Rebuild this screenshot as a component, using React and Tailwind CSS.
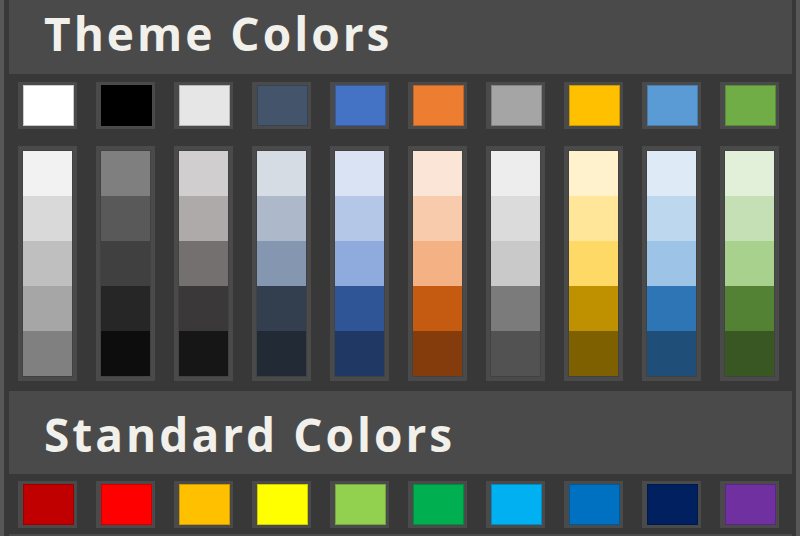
const theme = [
  { base: "#ffffff", shades: ["#f2f2f2", "#d9d9d9", "#bfbfbf", "#a6a6a6", "#808080"] },
  { base: "#000000", shades: ["#7f7f7f", "#595959", "#404040", "#262626", "#0d0d0d"] },
  { base: "#e7e6e6", shades: ["#d0cece", "#aeaaaa", "#757070", "#3a3838", "#171616"] },
  { base: "#44546a", shades: ["#d6dce4", "#adb9ca", "#8496b0", "#333f4f", "#222a35"] },
  { base: "#4472c4", shades: ["#dae3f3", "#b4c7e7", "#8faadc", "#2f5597", "#203864"] },
  { base: "#ed7d31", shades: ["#fbe5d6", "#f8cbad", "#f4b183", "#c55a11", "#843c0c"] },
  { base: "#a5a5a5", shades: ["#ededed", "#dbdbdb", "#c9c9c9", "#7b7b7b", "#525252"] },
  { base: "#ffc000", shades: ["#fff2cc", "#ffe699", "#ffd966", "#bf9000", "#7f6000"] },
  { base: "#5b9bd5", shades: ["#deebf7", "#bdd7ee", "#9dc3e6", "#2e75b6", "#1f4e79"] },
  { base: "#70ad47", shades: ["#e2f0d9", "#c5e0b4", "#a9d18e", "#548235", "#385723"] },
];

const standard = ["#c00000", "#ff0000", "#ffc000", "#ffff00", "#92d050", "#00b050", "#00b0f0", "#0070c0", "#002060", "#7030a0"];

const Swatch = ({ color }) => (
  <div className="w-[59px] h-[47px] shrink-0 bg-[#4a4a4a] pt-[3px] pl-[5px]">
    <div className="w-[51px] h-[41px] border border-black/20" style={{ background: color }} />
  </div>
);

const ShadeColumn = ({ shades }) => (
  <div className="w-[59px] shrink-0 bg-[#4a4a4a] py-[4px] pl-[4px]">
    <div className="w-[51px] flex flex-col border border-black/10">
      {shades.map((c) => (
        <div key={c} className="h-[45px]" style={{ background: c }} />
      ))}
    </div>
  </div>
);

const Header = ({ children, h }) => (
  <div className={`${h} shrink-0 mr-[4px] bg-[#4a4a4a] flex items-center pl-[35px]`}>
    <span className="text-[46px] font-bold text-[#f2f0ea] leading-none tracking-[3px] whitespace-nowrap" style={{ fontFamily: '"Open Sans", "Noto Sans", sans-serif' }}>
      {children}
    </span>
  </div>
);

export default function App() {
  return (
    <div className="w-[800px] h-[536px] overflow-hidden bg-[#383838] border-l-4 border-r-4 border-[#575757] flex flex-col pl-[5px]">
      <Header h="h-[74px] pb-[8px]">Theme Colors</Header>
      <div className="flex shrink-0 gap-[19px] pl-[9px] mt-[8px]">
        {theme.map((t) => (
          <Swatch key={t.base} color={t.base} />
        ))}
      </div>
      <div className="flex shrink-0 gap-[19px] pl-[9px] mt-[17px]">
        {theme.map((t) => (
          <ShadeColumn key={t.base} shades={t.shades} />
        ))}
      </div>
      <div className="mt-[10px] shrink-0">
        <Header h="h-[83px] pt-[2px]">Standard Colors</Header>
      </div>
      <div className="flex shrink-0 gap-[19px] pl-[9px] mt-[7px]">
        {standard.map((c) => (
          <Swatch key={c} color={c} />
        ))}
      </div>
      <div className="mt-[6px] h-[20px] shrink-0 mr-[4px] bg-[#4a4a4a]" />
    </div>
  );
}
